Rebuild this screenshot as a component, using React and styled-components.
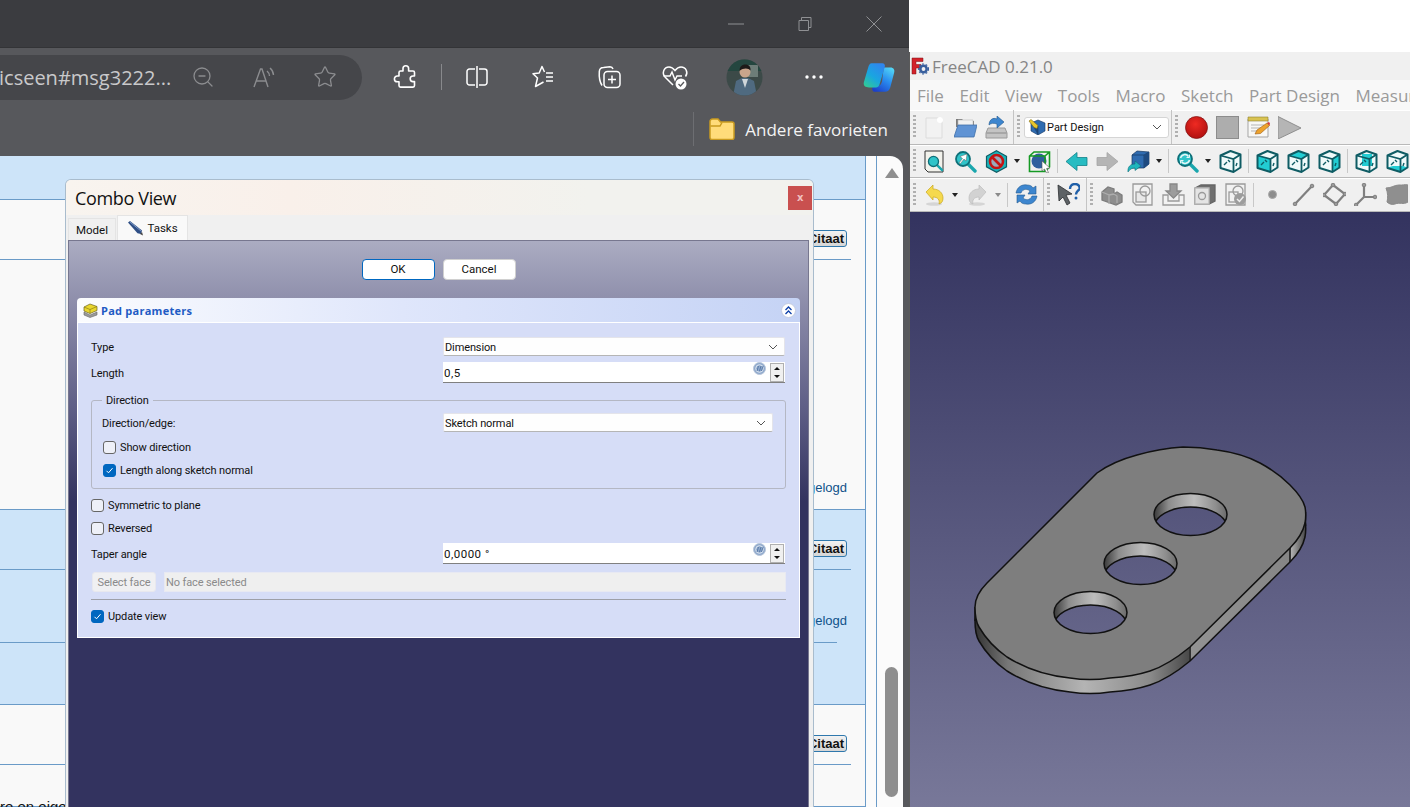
import React from "react";
import styled, { createGlobalStyle } from "styled-components";
import { ZoomOut, Star } from "lucide-react";

const UI = `"Open Sans", "Noto Sans", sans-serif`;
const FORM = `Roboto, "Open Sans", sans-serif`;

const GlobalStyle = createGlobalStyle`
  html, body { margin: 0; padding: 0; height: 100%; }
  body { overflow: hidden; font-family: ${UI}; }
  #root { height: 100%; }
  * { box-sizing: border-box; }
`;

const Shell = styled.div`
  display: flex;
  width: 1410px;
  height: 807px;
  overflow: hidden;
  background: #fff;
`;

/* ---------- browser chrome ---------- */
const Browser = styled.div`
  display: flex;
  flex-direction: column;
  width: 909px;
  flex-shrink: 0;
  background: #57585c;
`;

const TitleBar = styled.div`
  display: flex;
  justify-content: flex-end;
  align-items: center;
  height: 48px;
  padding-right: 27px;
  gap: 53px;
  background: #3b3c40;
  box-shadow: inset 0 -1px 0 #333437;
`;

const WinIcon = styled.svg`
  width: 16px;
  height: 16px;
  fill: none;
  stroke: #8f9093;
  stroke-width: 1;
`;

const NavRow = styled.div`
  display: flex;
  align-items: center;
  height: 64px;
  padding-bottom: 6px;
`;

const AddressBar = styled.div`
  display: flex;
  align-items: center;
  width: 362px;
  height: 45px;
  padding-right: 25px;
  border-radius: 0 23px 23px 0;
  background: #45464a;
  color: #c9c9cb;
  font-size: 20px;
  overflow: hidden;
`;

const AddressText = styled.span`
  flex: 1;
  white-space: nowrap;
  margin-left: -1px;
`;

const AddressIcons = styled.div`
  display: flex;
  align-items: center;
  gap: 36px;
  color: #8b8c8f;
`;

const NavButtons = styled.div`
  display: flex;
  align-items: center;
  gap: 30px;
  margin-left: 25px;
`;

const NavButton = styled.div`
  display: flex;
  justify-content: center;
  align-items: center;
  width: ${(p) => p.$w || 36}px;
  height: 36px;
  color: #fff;
`;

const NavDivider = styled.div`
  width: 1px;
  height: 26px;
  margin: 0 -13px 0 -12px;
  background: #88898c;
`;

const FavRow = styled.div`
  display: flex;
  justify-content: flex-end;
  align-items: center;
  height: 44px;
  padding: 0 21px 10px 0;
  color: #f3f3f3;
  font-size: 17px;
`;

const FavDivider = styled.div`
  width: 1px;
  height: 34px;
  margin-right: 15px;
  background: #6d6e72;
`;

const FavLabel = styled.span`
  margin-left: 10px;
`;

const BrowserPage = styled.div`
  position: relative;
  display: flex;
  flex: 1;
  min-height: 0;
  overflow: hidden;
`;

/* ---------- forum page behind the dialog ---------- */
const Forum = styled.div`
  display: flex;
  flex-direction: column;
  width: 866px;
  border-right: 1px solid #6a9bc8;
  background: #f9f9f9;
`;

const ForumRow = styled.div`
  display: flex;
  flex-direction: column;
  height: ${(p) => p.$h}px;
  flex-shrink: 0;
  border-bottom: 1px solid #6a9bc8;
  background: ${(p) => (p.$alt ? "#cde4f9" : "#f9f9f9")};
`;

const PostHead = styled.div`
  display: flex;
  justify-content: flex-end;
  height: 60px;
  flex-shrink: 0;
  margin-right: 14px;
  padding: 30px 4px 0 0;
  border-bottom: 1px solid #6a9bc8;
`;

const QuoteButton = styled.div`
  height: 17px;
  padding: 0 2px;
  border: 1px solid #2f78ad;
  border-radius: 3px;
  background: linear-gradient(#f2f2f2, #d5d5d5);
  color: #111;
  font: bold 13px/15px "Liberation Sans", sans-serif;
`;

const SignedText = styled.div`
  color: #105289;
  font: 13px/17px "Liberation Sans", sans-serif;
  text-align: right;
`;

const PostBody = styled.div`
  display: flex;
  flex: 1;
  flex-direction: column;
  justify-content: flex-end;
  padding: 0 18px 13px 0;
`;

const SignedBlock = styled.div`
  width: 837px;
  height: 73px;
  padding-top: 42px;
  border-bottom: 1px solid #6a9bc8;

  ${SignedText} {
    margin-right: -10px;
  }
`;

const PostText = styled.div`
  margin-top: 33px;
  color: #111;
  font: 15px/18px "Liberation Sans", sans-serif;
`;

const Gutter = styled.div`
  width: 11px;
  border-right: 1px solid #6a9bc8;
  background: #fbfbfb;
`;

const ScrollTrack = styled.div`
  display: flex;
  flex-direction: column;
  justify-content: space-between;
  align-items: center;
  width: 26px;
  padding: 12px 5px 10px 8px;
  border-top-right-radius: 13px;
  background: #fbfbfb;
`;

const ScrollArrow = styled.div`
  width: 0;
  height: 0;
  border-left: 7px solid transparent;
  border-right: 7px solid transparent;
  border-bottom: 10px solid #8f8f8f;
`;

const ScrollThumb = styled.div`
  width: 13px;
  height: 130px;
  border-radius: 7px;
  background: #8e8e8e;
`;

/* ---------- Combo View dialog ---------- */
const Dialog = styled.div`
  position: absolute;
  top: 24px;
  left: 66px;
  bottom: -4px;
  display: flex;
  flex-direction: column;
  width: 747px;
  padding: 0 4px 0 2px;
  border-radius: 5px 5px 0 0;
  background: #f0f0f0;
  box-shadow: 0 0 0 1px #a9bccd;
  font-family: ${FORM};
`;

const DialogHead = styled.div`
  display: flex;
  justify-content: space-between;
  align-items: center;
  height: 35px;
  margin: 0 -4px 0 -2px;
  padding: 0 1px 0 9px;
  border-radius: 5px 5px 0 0;
  background: linear-gradient(90deg, #f8f4ef, #f9f0ea 30%, #f2f2ee 70%);
  color: #111;
  font-family: ${UI};
  font-size: 18px;
  letter-spacing: -0.35px;
`;

const CloseBox = styled.div`
  display: flex;
  justify-content: center;
  align-items: center;
  width: 24px;
  height: 24px;
  background: #c9504f;
  color: #f0c0c0;
  font: bold 10px "DejaVu Sans", sans-serif;
`;

const TabBar = styled.div`
  display: flex;
  align-items: flex-end;
  height: 25px;
  gap: 1px;
`;

const Tab = styled.div`
  display: flex;
  justify-content: center;
  align-items: center;
  gap: 3px;
  width: ${(p) => p.$w}px;
  height: ${(p) => (p.$active ? 25 : 22)}px;
  border: 1px solid #e4e4e4;
  border-bottom: 0;
  background: ${(p) => (p.$active ? "#f9f9f9" : "#f0f0f0")};
  color: #111;
  font-size: 11.5px;
`;

const TaskPanel = styled.div`
  flex: 1;
  padding: 18px 8px 0;
  border: 1px solid #77778f;
  background: linear-gradient(#abacc2 0, #8e8eab 60px, #5d5d85 170px, #33335f 260px);
`;

const ActionRow = styled.div`
  display: flex;
  justify-content: center;
  gap: 8px;
  margin-bottom: 18px;
`;

const ActionButton = styled.div`
  width: 73px;
  height: 21px;
  border: 1px solid ${(p) => (p.$primary ? "#0067c0" : "#d0d0d0")};
  border-radius: 4px;
  background: #fff;
  color: #111;
  font-size: 11.5px;
  line-height: 19px;
  text-align: center;
`;

const PadPanel = styled.div`
  width: 723px;
`;

const PadHead = styled.div`
  display: flex;
  align-items: center;
  gap: 3px;
  height: 25px;
  padding: 0 4px 0 6px;
  border-radius: 4px 4px 0 0;
  border-bottom: 1px solid #fff;
  background: linear-gradient(90deg, #fbfcfe, #dfe6fb 45%, #c5d3f5);
  color: #1f5bc4;
  font-family: ${UI};
  font-size: 11px;
  font-weight: 700;
  letter-spacing: 0.25px;
`;

const PadTitle = styled.span`
  flex: 1;
`;

const PadBody = styled.div`
  display: flex;
  flex-direction: column;
  padding: 14px 13px 10px;
  border: 1px solid #fff;
  border-top: 0;
  background: #d6ddf7;
  color: #111;
  font-size: 11px;
  letter-spacing: -0.12px;
`;

const FormRow = styled.div`
  display: flex;
  justify-content: space-between;
  align-items: center;
  margin-top: ${(p) => p.$mt || 0}px;
  padding-right: ${(p) => p.$pr || 0}px;
`;

const RowLabel = styled.span`
  padding-top: 2px;
`;

const SelectBox = styled.div`
  display: flex;
  justify-content: space-between;
  align-items: center;
  width: ${(p) => p.$w}px;
  height: 19px;
  padding: 1px 6px 0 1px;
  border: 1px solid #e4e4ea;
  border-bottom-color: #b5b5b5;
  border-radius: 2px;
  background: #fefefe;
`;

const SpinField = styled.div`
  display: flex;
  align-items: center;
  width: 342px;
  height: 21px;
  padding: 1px 1px 0 1px;
  border-bottom: 1px solid #808080;
  background: #fff;
  font-size: 11.5px;
  letter-spacing: 0.5px;
`;

const SpinValue = styled.span`
  flex: 1;
`;

const SpinButtons = styled.div`
  display: flex;
  flex-direction: column;
  margin-left: 4px;
  width: 14px;
  border: 1px solid #b0b0b0;
`;

const SpinPart = styled.div`
  display: flex;
  justify-content: center;
  align-items: center;
  height: 8.5px;
  background: #f0f0f0;

  &:after {
    content: "";
    border-left: 3px solid transparent;
    border-right: 3px solid transparent;
    ${(p) => (p.$down ? "border-top: 3px solid #111;" : "border-bottom: 3px solid #111;")}
  }
`;

const GroupBox = styled.fieldset`
  margin: 9px 0 0;
  padding: 5px 12px 7px 10px;
  min-width: 0;
  border: 1px solid #b4b7c4;
  border-radius: 3px;
`;

const GroupLegend = styled.legend`
  padding: 2px 4px 0;
  font-size: 11px;
  line-height: 14px;
`;

const CheckRow = styled.label`
  display: flex;
  align-items: center;
  gap: 4px;
  height: 23px;
  margin-top: ${(p) => p.$mt || 0}px;
  padding-top: 1px;
`;

const CheckBox = styled.span`
  display: flex;
  justify-content: center;
  align-items: center;
  width: 13px;
  height: 13px;
  margin-left: ${(p) => p.$ml || 0}px;
  border: 1px solid ${(p) => (p.$on ? "#0067c0" : "#666")};
  border-radius: 3px;
  background: ${(p) => (p.$on ? "#0067c0" : "#eef0f8")};
`;

const FaceRow = styled.div`
  display: flex;
  gap: 8px;
  height: 20px;
  margin: 8px 0 0 1px;
  color: #8a8a8a;
`;

const FaceButton = styled.div`
  width: 64px;
  border: 1px solid #e8e8ee;
  border-radius: 3px;
  background: #f0f0f2;
  line-height: 19px;
  text-align: center;
`;

const FaceField = styled.div`
  flex: 1;
  padding-left: 1px;
  border: 1px solid #e8e9f2;
  background: #efefef;
  line-height: 19px;
`;

const Divider = styled.div`
  height: 1px;
  margin-top: 7px;
  background: #9d9fa8;
`;

/* ---------- FreeCAD window ---------- */
const CadColumn = styled.div`
  display: flex;
  flex-direction: column;
  flex: 1;
  min-width: 0;
`;

const WhiteGap = styled.div`
  height: 52px;
  background: #fff;
`;

const CadWindow = styled.div`
  display: flex;
  flex-direction: column;
  flex: 1;
  min-height: 0;
  border-left: 1px solid #5a5a5a;
  background: #f0f0f0;
  overflow: hidden;
`;

const CadTitle = styled.div`
  display: flex;
  align-items: center;
  gap: 3px;
  height: 28px;
  padding-left: 1px;
  color: #858585;
  font-size: 17px;
`;

const MenuBar = styled.div`
  display: flex;
  align-items: center;
  gap: 15.5px;
  height: 30px;
  padding-left: 7px;
  background: #f8f8f8;
  color: #9a9a9a;
  font-size: 17px;
  white-space: nowrap;
`;

const ToolRow = styled.div`
  display: flex;
  height: ${(p) => p.$h}px;
  flex-shrink: 0;
  border-bottom: 1px solid #b9b9b9;
  box-shadow: inset 0 1px 0 #fff;
  background: #f0f0f0;
`;

const Segment = styled.div`
  display: flex;
  align-items: center;
  gap: 8px;
  ${(p) => (p.$w ? `width: ${p.$w}px; border-right: 1px solid #c4c4c4;` : "")}
  flex-shrink: 0;
  padding-left: 3px;
`;

const Grip = styled.div`
  width: 3px;
  height: 24px;
  margin-right: -1px;
  background: repeating-linear-gradient(to bottom, #b0b0b0 0 2px, transparent 2px 4px);
`;

const Sep = styled.div`
  width: 1px;
  height: 24px;
  margin: 0 -1px 0 -2px;
  background: #c8c8c8;
`;

const DropArrow = styled.div`
  width: 0;
  height: 0;
  margin-left: -2px;
  border-left: 3.5px solid transparent;
  border-right: 3.5px solid transparent;
  border-top: 4px solid ${(p) => (p.$dim ? "#8a8a8a" : "#222")};
`;

const WorkbenchBox = styled.div`
  display: flex;
  align-items: center;
  width: 145px;
  height: 21px;
  margin-left: -3px;
  padding: 0 6px 0 3px;
  border: 1px solid #d5d5d5;
  border-radius: 3px;
  background: #fff;
  color: #111;
  font-family: ${FORM};
  font-size: 11px;
`;

const WorkbenchLabel = styled.span`
  flex: 1;
  margin-left: 1px;
`;

const Ico = styled.svg`
  display: block;
  width: 23px;
  height: 23px;
  flex-shrink: 0;
`;

const BadgeSvg = styled.svg`
  flex-shrink: 0;
  width: 13px;
  height: 13px;
  margin-top: -8px;
`;

const Viewport = styled.div`
  flex: 1;
  min-height: 0;
  background: linear-gradient(#33335f, #787899);
`;

const ModelSvg = styled.svg`
  display: block;
  width: 500px;
  height: 595px;
`;

/* ---------- small drawings ---------- */
const Chevron = () => (
  <svg width="10" height="6" viewBox="0 0 10 6" fill="none" stroke="#555" strokeWidth="1">
    <path d="M1 1l4 4 4-4" />
  </svg>
);

const Tick = () => (
  <svg width="9" height="9" viewBox="0 0 9 9" fill="none" stroke="#fff" strokeWidth="1">
    <path d="M1.5 4.8l2 2 4-4.6" />
  </svg>
);

const FxBadge = () => (
  <BadgeSvg viewBox="0 0 13 13">
    <circle cx="6.5" cy="6.5" r="6" fill="#8fa9cc" stroke="#b8c6da" />
    <circle cx="6.5" cy="6.5" r="3.8" fill="none" stroke="#dfe7f2" strokeWidth="1" />
    <path d="M4 9l1.5-5M6.5 9L8 4M8.5 9L10 4" stroke="#4d6f9e" strokeWidth=".8" />
  </BadgeSvg>
);

const PencilIcon = () => (
  <svg width="17" height="15" viewBox="0 0 17 15">
    <path d="M1 1.5L3 0l12 9.5-1 3.5-3.5-.8z" fill="#2f4f86" />
    <path d="M3 1l11 9" stroke="#7d9ac8" strokeWidth="1" />
    <path d="M13 13l3 1.5-1-3.5z" fill="#444" />
  </svg>
);

const PadIcon = () => (
  <svg width="15" height="15" viewBox="0 0 15 15">
    <path d="M1 9l6 3 7-3v3l-7 2.5L1 12z" fill="#9a9a9a" stroke="#666" strokeWidth=".6" />
    <path d="M1 4l6-3 7 2.5v4L7 10.5 1 8z" fill="#e9d62e" stroke="#6b6320" strokeWidth=".7" />
    <path d="M1 4l6 2.5L14 3.5M7 6.5v4" fill="none" stroke="#8c7f14" strokeWidth=".7" />
  </svg>
);

const CollapseIcon = () => (
  <svg width="15" height="15" viewBox="0 0 15 15" fill="none">
    <circle cx="7.5" cy="7.5" r="7" fill="#fff" stroke="#c3cbe0" />
    <path d="M4.5 7l3-3 3 3M4.5 11l3-3 3 3" stroke="#0b3ea8" strokeWidth="1.3" />
  </svg>
);

const ReadAloud = () => (
  <svg width="26" height="26" viewBox="0 0 26 26" fill="none" stroke="currentColor" strokeWidth="1.4">
    <path d="M3 23L9.5 5h1.5L17 23M5.5 17h9" />
    <path d="M16 7a7 7 0 0 1 2.5 5M19 4a10 10 0 0 1 3.5 7" />
  </svg>
);

const PuzzleIcon = () => (
  <svg width="26" height="26" viewBox="0 0 26 26" fill="none" stroke="currentColor" strokeWidth="1.6" strokeLinejoin="round">
    <path d="M11 4.5a2.8 2.8 0 0 1 5.6 0V7h4.4A1.5 1.5 0 0 1 22.5 8.5V12h-1.5a2.8 2.8 0 0 0 0 5.6h1.5v4A1.5 1.5 0 0 1 21 23.1H8.5A1.5 1.5 0 0 1 7 21.6v-3.8H5.3a2.9 2.9 0 0 1 0-5.8H7V8.5A1.5 1.5 0 0 1 8.5 7H11z" />
  </svg>
);

const SplitIcon = () => (
  <svg width="26" height="26" viewBox="0 0 26 26" fill="none" stroke="currentColor" strokeWidth="1.5">
    <path d="M11 5H5.5A2.5 2.5 0 0 0 3 7.5v11A2.5 2.5 0 0 0 5.5 21H11M15 5h5.5A2.5 2.5 0 0 1 23 7.5v11a2.5 2.5 0 0 1-2.5 2.5H15" />
    <path d="M13 2v22" />
  </svg>
);

const FavListIcon = () => (
  <svg width="26" height="26" viewBox="0 0 26 26" fill="none" stroke="currentColor" strokeWidth="1.5" strokeLinejoin="round">
    <path d="M14.5 8L12 2.5 9.2 9 3 9.8 7.5 14 5.5 22.5l8-4.5" />
    <path d="M16 9h7M16 13h7M16 17h7" />
  </svg>
);

const CollectionsIcon = () => (
  <svg width="26" height="26" viewBox="0 0 26 26" fill="none" stroke="currentColor" strokeWidth="1.5">
    <path d="M6 21.5C3.8 18 3 12 3.3 7.5 3.5 5 5 3.5 7.5 3.5L14 2.8c1.5 0 2.5.7 3 2.2" />
    <rect x="8" y="7.5" width="16" height="16" rx="3.5" />
    <path d="M16 11.5v8M12 15.5h8" />
  </svg>
);

const HealthIcon = () => (
  <svg width="28" height="28" viewBox="0 0 28 28" fill="none" stroke="currentColor" strokeWidth="1.5">
    <path d="M12 22l-8-8C.5 10 3 4 8 4c2.5 0 4.3 1.3 6 3.5C15.7 5.3 17.5 4 20 4c5 0 7.5 5.5 4.5 9.5" />
    <path d="M2.5 13H9l2-4 3 8 2-4h5" />
    <circle cx="20" cy="21" r="5.5" fill="#fff" stroke="none" />
    <path d="M17.5 21l2 2 3.5-4" stroke="#57585c" strokeWidth="1.3" />
  </svg>
);

const Avatar = () => (
  <svg width="37" height="37" viewBox="0 0 37 37">
    <defs>
      <clipPath id="avatar-clip">
        <circle cx="18.5" cy="18.5" r="18" />
      </clipPath>
    </defs>
    <g clipPath="url(#avatar-clip)">
      <rect width="37" height="37" fill="#3c4a48" />
      <rect x="0" y="0" width="37" height="12" fill="#24463f" />
      <rect x="22" y="6" width="10" height="12" fill="#6d7d78" />
      <path d="M7 37l3-15 6-3h6l6 3 3 15z" fill="#4f6a80" />
      <path d="M16 20l3 9 3-9z" fill="#cfd6da" />
      <circle cx="19" cy="13" r="5.5" fill="#c9a58c" />
      <path d="M13.5 12c0-5 3-6.5 6-6.5s5.5 2 5 6c-2-2.5-7-3-11 .5z" fill="#1d1a18" />
    </g>
  </svg>
);

const DotsIcon = () => (
  <svg width="20" height="6" viewBox="0 0 20 6" fill="#fff">
    <circle cx="3" cy="3" r="1.7" />
    <circle cx="10" cy="3" r="1.7" />
    <circle cx="17" cy="3" r="1.7" />
  </svg>
);

const CopilotLogo = () => (
  <svg width="37" height="35" viewBox="0 0 37 35">
    <defs>
      <linearGradient id="cop-a" x1="0" y1="1" x2=".7" y2="0">
        <stop offset="0" stopColor="#35d08a" />
        <stop offset=".5" stopColor="#19a6e0" />
        <stop offset="1" stopColor="#2f86ee" />
      </linearGradient>
      <linearGradient id="cop-b" x1=".2" y1="1" x2=".8" y2="0">
        <stop offset="0" stopColor="#1b3fc9" />
        <stop offset=".55" stopColor="#2a8ff0" />
        <stop offset="1" stopColor="#52d4f5" />
      </linearGradient>
    </defs>
    <path d="M24 6h8c3 0 5 2.5 4 6l-4.5 17c-1 3-3 5-6 5H14c-3 0-4-3-3-5l2-2h4c3 0 4-2 5-5z" fill="url(#cop-b)" />
    <path d="M10 1h12c3 0 4 2 3 5l-6 20c-1 2-2 3-4 3H7c-4 0-7-2-6-6L6 6c.7-3 2-5 4-5z" fill="url(#cop-a)" />
  </svg>
);

const FolderIcon = () => (
  <svg width="26" height="22" viewBox="0 0 26 22">
    <path d="M1 3.5A2.5 2.5 0 0 1 3.5 1H9l2.5 3H23a2 2 0 0 1 2 2v13.5a2 2 0 0 1-2 2H3a2 2 0 0 1-2-2z" fill="#ffdc7a" stroke="#c99a1f" strokeWidth="1.5" />
    <path d="M1.5 8H11l2-3.5" fill="none" stroke="#c99a1f" strokeWidth="1.5" />
  </svg>
);

const FreeCadLogo = () => (
  <svg width="18" height="18" viewBox="0 0 18 18">
    <path d="M1 1h11v3.5H5v3h5V11H5v6H1z" fill="#d3222a" stroke="#7a1115" strokeWidth=".5" />
    <circle cx="12.5" cy="12" r="3.2" fill="none" stroke="#39609e" strokeWidth="2.6" />
    <circle cx="12.5" cy="12" r="5" fill="none" stroke="#39609e" strokeWidth="1.2" strokeDasharray="1.8 1.8" />
  </svg>
);

const NewDoc = () => (
  <Ico viewBox="0 0 23 23">
    <path d="M3 2h16v20H3z" fill="#f2f2f2" stroke="#dcdcdc" />
    <circle cx="17" cy="4" r="3" fill="#fff" />
  </Ico>
);

const OpenDoc = () => (
  <Ico viewBox="0 0 23 23">
    <path d="M2 3h6l2 2h10v6H2z" fill="#7c7c7c" />
    <path d="M4 4h15v8H4z" fill="#f2f2f2" stroke="#bbb" strokeWidth=".6" />
    <path d="M4 9h19l-3 12H0z" fill="#5f93d4" stroke="#3f6ea8" strokeWidth=".8" />
  </Ico>
);

const SaveDoc = () => (
  <Ico viewBox="0 0 23 23">
    <path d="M3 12h17l2 5v5H1v-5z" fill="#c4c4c4" stroke="#9a9a9a" />
    <path d="M1.5 17h20" stroke="#8a8a8a" />
    <path d="M4 9C4 4 8 1 12 3V0l7 6-7 6V8C9 7 6 7 4 9z" fill="#3d86cf" stroke="#22598f" strokeWidth=".6" />
  </Ico>
);

const RecordIcon = () => (
  <Ico viewBox="0 0 23 23">
    <defs>
      <radialGradient id="rec" cx=".45" cy=".35" r=".75">
        <stop offset="0" stopColor="#ef2a22" />
        <stop offset="1" stopColor="#a80d0d" />
      </radialGradient>
    </defs>
    <circle cx="11.5" cy="11.5" r="11" fill="url(#rec)" stroke="#7d1010" strokeWidth=".7" />
  </Ico>
);

const StopIcon = () => (
  <Ico viewBox="0 0 23 23">
    <rect x=".5" y=".5" width="22" height="22" fill="#adadad" stroke="#8c8c8c" />
  </Ico>
);

const MacroIcon = () => (
  <Ico viewBox="0 0 23 23">
    <path d="M1 3h20v18H1z" fill="#f8f8f6" stroke="#a5a5a5" />
    <path d="M1 1h20v4H1z" fill="#d9c352" stroke="#8e8230" strokeWidth=".6" />
    <path d="M4 9h13M4 12h10M4 15h6" stroke="#b5b5b5" />
    <path d="M8 18l2-4 10-7 2.5 2.5-9 8z" fill="#eda22c" stroke="#9c5a12" strokeWidth=".6" />
    <path d="M20 7l2.5 2.5 .5-2-1-1.5z" fill="#d93b3b" />
  </Ico>
);

const PlayIcon = () => (
  <Ico viewBox="0 0 23 23">
    <path d="M0 .5L23 12 0 23z" fill="#b5b5b5" stroke="#8f8f8f" />
  </Ico>
);

const Lens = ({ children }) => (
  <g>
    <path d="M13 13l8 8" stroke="#1aa6ad" strokeWidth="3.4" strokeLinecap="round" />
    <circle cx="9" cy="9" r="7" fill="#2fc4c9" stroke="#0f6f78" strokeWidth="1.8" />
    {children}
  </g>
);

const FitAll = () => (
  <Ico viewBox="0 0 23 23">
    <path d="M2 1h18v21H5l-3-3z" fill="#f2f2ec" stroke="#333" />
    <g transform="translate(4 5) scale(.72)">
      <Lens />
    </g>
  </Ico>
);

const FitSelection = () => (
  <Ico viewBox="0 0 23 23">
    <Lens>
      <path d="M5 13l3.5-4.5L6 6.5l7-2.5-1 7-2-2-3.5 4.5z" fill="#fff" stroke="#666" strokeWidth=".5" />
    </Lens>
  </Ico>
);

const DrawStyle = () => (
  <Ico viewBox="0 0 23 23">
    <path d="M11.5 .8l10 5.5v10.5l-10 5.5-10-5.5V6.3z" fill="#1ab4ba" stroke="#0f5c64" strokeWidth="1.2" />
    <circle cx="11.5" cy="11.5" r="6.5" fill="#9ab" stroke="#c41414" strokeWidth="2.6" />
    <path d="M7 7l9 9" stroke="#c41414" strokeWidth="2.6" />
  </Ico>
);

const BoundBox = () => (
  <Ico viewBox="0 0 23 23">
    <circle cx="11" cy="11" r="7.5" fill="#2e5f9e" />
    <path d="M1.5 6L6 2h15.5v15L17 21.5H1.5zM1.5 6H17v15.5M17 6l4.5-4" fill="none" stroke="#159a24" strokeWidth="1.6" />
    <path d="M14 11l8 7-3.5.5 2 4-2 .5-2-4-2.5 2z" fill="#fff" stroke="#555" strokeWidth=".6" />
  </Ico>
);

const ArrowBack = ({ dim }) => (
  <Ico viewBox="0 0 23 23">
    <path
      d={dim ? "M22 11.5L11 2.5v5H1v8h10v5z" : "M1 11.5l11-9v5h10v8H12v5z"}
      fill={dim ? "#b5b5b5" : "#27bcc2"}
      stroke={dim ? "#a5a5a5" : "#128189"}
      strokeWidth=".8"
    />
  </Ico>
);

const ViewsCube = () => (
  <Ico viewBox="0 0 23 23">
    <path d="M5 5l5-4 12 1v12l-5 4H5z" fill="#2f6bb0" stroke="#16365f" strokeWidth=".7" />
    <path d="M5 5h12v13M17 5l5-3" fill="none" stroke="#16365f" strokeWidth=".7" />
    <path d="M17 5l5-3v12l-5 4z" fill="#1e4a80" />
    <path d="M1 22c-.5-5 2-8 7-8v-3l6 5-6 4.5V18c-3 0-5 1-7 4z" fill="#1fb6bd" stroke="#0f6f78" strokeWidth=".6" />
  </Ico>
);

const SyncLens = () => (
  <Ico viewBox="0 0 23 23">
    <Lens>
      <path d="M4.5 8a4.5 4.5 0 0 1 8-1.5M13.5 10a4.5 4.5 0 0 1-8 1.5" fill="none" stroke="#e6f6f7" strokeWidth="1.5" />
      <path d="M13.5 4.5v3h-3M4.5 13.5v-3h3" fill="none" stroke="#e6f6f7" strokeWidth="1" />
    </Lens>
  </Ico>
);

/* teal wire cube, the views only differ in which face is filled */
const FACES = {
  front: "M1.5 5.5l13 3.5v13l-13-4z",
  top: "M1.5 5.5l10-4.5 10 3.5-7 4.5z",
  right: "M14.5 9l7-4.5v13l-7 4.5z",
  rear: "M7 4h10v12H7z",
  bottom: "M1.5 17.5L7 16h10l4.5 1.5-7 4.5z",
};

const ViewCube = ({ face }) => (
  <Ico viewBox="0 0 23 23">
    <path d="M1.5 5.5l10-4.5 10 3.5v13l-7 4.5-13-4z" fill="#f0fafa" />
    {FACES[face] && <path d={FACES[face]} fill="#22cdd3" />}
    <path d="M1.5 5.5l10-4.5 10 3.5v13l-7 4.5-13-4z" fill="none" stroke="#0f5c64" strokeWidth="2" strokeLinejoin="round" />
    <path d="M1.5 5.5l13 3.5 7-4.5M14.5 9v13" fill="none" stroke="#0f5c64" strokeWidth="1.8" />
    <path d="M5 15l3-3M9 10l2 2M18 13l-1 3" stroke="#0f5c64" strokeWidth="1.4" />
  </Ico>
);

const UndoIcon = ({ dim }) => (
  <Ico viewBox="0 0 23 23">
    <ellipse cx="11" cy="21" rx="8" ry="1.8" fill="#d5d5d5" />
    <g transform={dim ? "translate(23 0) scale(-1 1)" : undefined}>
      <path
        d="M3 9l7-7v4c6 0 10 4 10 9 0 3-1 5-4 6 1-4-1-7-6-7v3z"
        fill={dim ? "#d2d2d2" : "#f5d94e"}
        stroke={dim ? "#bdbdbd" : "#c9a81e"}
        strokeWidth=".7"
      />
    </g>
  </Ico>
);

const RefreshIcon = () => (
  <Ico viewBox="0 0 23 23">
    <path d="M1 10C2 4 7 1 12 2c3 0 5 1 6 3l3-2v8h-8l2-3c-2-2-7-3-9 2z" fill="#3d86cf" stroke="#22598f" strokeWidth=".6" />
    <path d="M22 13c-1 6-6 9-11 8-3 0-5-1-6-3l-3 2v-8h8l-2 3c2 2 7 3 9-2z" fill="#3d86cf" stroke="#22598f" strokeWidth=".6" />
  </Ico>
);

const WhatsThis = () => (
  <Ico viewBox="0 0 23 23">
    <path d="M1 2l14 9-6 1 4 8-3 2-4-8-4 4z" fill="#5d6265" stroke="#2c2f31" strokeWidth=".8" />
    <path d="M13 6c0-3 2-5 5-5s5 2 4.5 4.5c-.5 2-3.5 3-3.5 6" fill="none" stroke="#1f5fa8" strokeWidth="2.4" />
    <circle cx="19" cy="15" r="1.5" fill="#1f5fa8" />
  </Ico>
);

const GreyIcon = ({ children }) => (
  <Ico viewBox="0 0 23 23" fill="none" stroke="#9a9a9a" strokeWidth="1.3">
    {children}
  </Ico>
);

const ModelIcons = [
  <GreyIcon key="solid">
    <path d="M2 9l6-5 6 2v5l3-2 5 3v7l-6 3-14-5z" fill="#8d8d8d" stroke="#7c7c7c" />
    <path d="M2 9l7 3v9M9 12l5-1M14 11l3 2v7" stroke="#adadad" />
  </GreyIcon>,
  <GreyIcon key="sketch">
    <path d="M2 1h19v21H5l-3-3z" fill="#f2f2f2" />
    <rect x="5" y="9" width="10" height="10" fill="#e8e8e8" />
    <circle cx="14" cy="8" r="5" fill="none" />
  </GreyIcon>,
  <GreyIcon key="import">
    <path d="M1 12h5v6h11v-6h5v10H1z" fill="#f2f2f2" />
    <path d="M8 1h7v7h4l-7.5 7L4 8h4z" fill="#9c9c9c" stroke="#888" />
  </GreyIcon>,
  <GreyIcon key="part">
    <path d="M2 5l6-3h14v16l-6 3H2z" fill="#6f6f6f" stroke="#666" />
    <path d="M2 5h14v16H2z" fill="#e4e4e4" stroke="#bbb" />
    <circle cx="9" cy="13" r="3.5" />
  </GreyIcon>,
  <GreyIcon key="attach">
    <path d="M2 1h19v21H2z" fill="#f2f2f2" />
    <rect x="5" y="9" width="9" height="10" />
    <circle cx="14" cy="8" r="5" />
    <circle cx="16" cy="16" r="6" fill="#9d9d9d" stroke="none" />
    <path d="M13 16l2.5 2.5 4-5" stroke="#eee" strokeWidth="1.5" />
  </GreyIcon>,
];

const Sketchy = ({ children }) => (
  <Ico viewBox="0 0 23 23" fill="none" stroke="#7f7f7f" strokeWidth="2.2">
    {children}
  </Ico>
);

const Node = ({ x, y }) => <circle cx={x} cy={y} r="1.8" fill="#9a9a9a" stroke="#7f7f7f" strokeWidth="1" />;

const PrimitiveIcons = [
  <Sketchy key="point">
    <circle cx="11.5" cy="11.5" r="4" fill="#8d8d8d" stroke="#a8a8a8" strokeWidth="1" />
  </Sketchy>,
  <Sketchy key="line">
    <path d="M3 21L20 3" />
    <Node x={3} y={21} />
    <Node x={20} y={3} />
  </Sketchy>,
  <Sketchy key="rect">
    <path d="M10 2L22 11 13 21 1 12z" />
    <Node x={10} y={2} />
    <Node x={22} y={11} />
    <Node x={13} y={21} />
    <Node x={1} y={12} />
  </Sketchy>,
  <Sketchy key="axes">
    <path d="M10 2v12M10 14l12 0M10 14L2 22" />
    <Node x={10} y={2} />
    <Node x={21} y={14} />
    <Node x={2} y={22} />
  </Sketchy>,
  <Sketchy key="face">
    <path d="M1 5c6 0 8-3 13-3 3 .5 6-1 9 0v17c-5 3-8 0-13 2-3 1-6 0-8-2 1-4 1-9-1-14z" fill="#8f8f8f" stroke="#8a8a8a" strokeWidth="1" />
  </Sketchy>,
];

const WorkbenchIcon = () => (
  <svg width="18" height="16" viewBox="0 0 18 16">
    <path d="M3 4l7-3 7 3v8l-7 4-7-4z" fill="#2f6bb0" stroke="#16365f" strokeWidth=".6" />
    <path d="M3 4l7 3v9" fill="#1e4a80" stroke="#16365f" strokeWidth=".6" />
    <path d="M1 2l2-1.5 7 6-1 3-3-1z" fill="#e8c62e" stroke="#7f6a12" strokeWidth=".6" />
  </svg>
);

/* ---------- the part in the 3D view ---------- */
const TOP_FACE =
  "M1097 473L987 583C979 591 975 599 975 607C975 615 976 622 979 627C986 639 997 650 1007 657C1026 669 1048 676 1070 678C1083 680 1097 680 1110 678C1125 677 1138 675 1150 671C1165 666 1178 657 1190 647L1290 548C1298 540 1303 532 1305 523C1306 517 1306 512 1305 507C1303 499 1297 492 1290 485C1281 476 1271 469 1260 463C1247 456 1232 452 1217 450C1206 448 1195 447 1183 447C1167 448 1151 451 1137 455C1122 459 1108 465 1097 473Z";

const HOLES = [
  { id: "hole-a", cx: 1190.5, cy: 514.5 },
  { id: "hole-b", cx: 1140.5, cy: 563.5 },
  { id: "hole-c", cx: 1090.5, cy: 612.5 },
];

const Hole = ({ id, cx, cy }) => (
  <g>
    <clipPath id={id}>
      <ellipse cx={cx} cy={cy} rx="36.5" ry="21" />
    </clipPath>
    <ellipse cx={cx} cy={cy} rx="36.5" ry="21" fill="url(#hole-wall)" />
    <ellipse
      cx={cx}
      cy={cy + 13.5}
      rx="36.5"
      ry="21"
      fill="url(#scene-bg)"
      stroke="#111"
      strokeWidth="1.5"
      clipPath={`url(#${id})`}
    />
    <ellipse cx={cx} cy={cy} rx="36.5" ry="21" fill="none" stroke="#111" strokeWidth="1.5" />
  </g>
);

const PartModel = () => (
  <ModelSvg viewBox="910 212 500 595">
    <defs>
      <linearGradient id="scene-bg" gradientUnits="userSpaceOnUse" x1="0" y1="212" x2="0" y2="807">
        <stop offset="0" stopColor="#33335f" />
        <stop offset="1" stopColor="#787899" />
      </linearGradient>
      <linearGradient id="hole-wall" x1="0" y1="0" x2="1" y2="0">
        <stop offset="0" stopColor="#3a3a3a" />
        <stop offset=".2" stopColor="#8c8c8c" />
        <stop offset=".55" stopColor="#bdbdbd" />
        <stop offset=".85" stopColor="#8d8d8d" />
        <stop offset="1" stopColor="#6a6a6a" />
      </linearGradient>
      <linearGradient id="side-wall" gradientUnits="userSpaceOnUse" x1="975" y1="0" x2="1306" y2="0">
        <stop offset="0" stopColor="#333" />
        <stop offset=".1" stopColor="#777" />
        <stop offset=".33" stopColor="#b4b4b4" />
        <stop offset=".53" stopColor="#8a8a8a" />
        <stop offset=".645" stopColor="#4a4a4a" />
        <stop offset=".648" stopColor="#939393" />
        <stop offset=".95" stopColor="#858585" />
        <stop offset=".955" stopColor="#b0b0b0" />
        <stop offset="1" stopColor="#444" />
      </linearGradient>
    </defs>
    <path d={TOP_FACE} transform="translate(0 14)" fill="url(#side-wall)" stroke="#111" strokeWidth="1.5" />
    <path d="M975 607v14M1305.5 512v14" stroke="#111" strokeWidth="1.5" />
    <path d={TOP_FACE} fill="#7e7e7e" stroke="#111" strokeWidth="1.5" />
    <path d="M1190 647v14M1290 548v14" stroke="#111" strokeWidth="1.5" />
    {HOLES.map((h) => (
      <Hole key={h.id} {...h} />
    ))}
  </ModelSvg>
);

export default function App() {
  return (
    <Shell>
      <GlobalStyle />
      <Browser>
        <TitleBar>
          <WinIcon viewBox="0 0 16 16">
            <path d="M0 8h16" />
          </WinIcon>
          <WinIcon viewBox="0 0 16 16">
            <path d="M2 4.5h9.5v10H2zM4.5 4V1.5H14v10h-2" />
          </WinIcon>
          <WinIcon viewBox="0 0 16 16">
            <path d="M.5.5l15 15M15.5.5l-15 15" />
          </WinIcon>
        </TitleBar>
        <NavRow>
          <AddressBar>
            <AddressText>icseen#msg3222...</AddressText>
            <AddressIcons>
              <ZoomOut size={24} strokeWidth={1.3} />
              <ReadAloud />
              <Star size={24} strokeWidth={1.3} />
            </AddressIcons>
          </AddressBar>
          <NavButtons>
            <NavButton>
              <PuzzleIcon />
            </NavButton>
            <NavDivider />
            <NavButton>
              <SplitIcon />
            </NavButton>
            <NavButton>
              <FavListIcon />
            </NavButton>
            <NavButton>
              <CollectionsIcon />
            </NavButton>
            <NavButton>
              <HealthIcon />
            </NavButton>
            <NavButton $w={42}>
              <Avatar />
            </NavButton>
            <NavButton $w={38}>
              <DotsIcon />
            </NavButton>
            <NavButton $w={32}>
              <CopilotLogo />
            </NavButton>
          </NavButtons>
        </NavRow>
        <FavRow>
          <FavDivider />
          <FolderIcon />
          <FavLabel>Andere favorieten</FavLabel>
        </FavRow>
        <BrowserPage>
          <Forum>
            <ForumRow $alt $h={44} />
            <ForumRow $h={310}>
              <PostHead>
                <QuoteButton>Citaat</QuoteButton>
              </PostHead>
              <PostBody>
                <SignedText>Ingelogd</SignedText>
              </PostBody>
            </ForumRow>
            <ForumRow $alt $h={195}>
              <PostHead>
                <QuoteButton>Citaat</QuoteButton>
              </PostHead>
              <SignedBlock>
                <SignedText>Ingelogd</SignedText>
              </SignedBlock>
            </ForumRow>
            <ForumRow $h={102}>
              <PostHead>
                <QuoteButton>Citaat</QuoteButton>
              </PostHead>
              <PostText>re en eigen</PostText>
            </ForumRow>
          </Forum>
          <Gutter />
          <ScrollTrack>
            <ScrollArrow />
            <ScrollThumb />
          </ScrollTrack>

          <Dialog>
            <DialogHead>
              <span>Combo View</span>
              <CloseBox>x</CloseBox>
            </DialogHead>
            <TabBar>
              <Tab $w={48}>Model</Tab>
              <Tab $w={71} $active>
                <PencilIcon />
                Tasks
              </Tab>
            </TabBar>
            <TaskPanel>
              <ActionRow>
                <ActionButton $primary>OK</ActionButton>
                <ActionButton>Cancel</ActionButton>
              </ActionRow>
              <PadPanel>
                <PadHead>
                  <PadIcon />
                  <PadTitle>Pad parameters</PadTitle>
                  <CollapseIcon />
                </PadHead>
                <PadBody>
                  <FormRow $pr={1}>
                    <RowLabel>Type</RowLabel>
                    <SelectBox $w={342}>
                      Dimension
                      <Chevron />
                    </SelectBox>
                  </FormRow>
                  <FormRow $mt={6} $pr={1}>
                    <RowLabel>Length</RowLabel>
                    <SpinField>
                      <SpinValue>0,5</SpinValue>
                      <FxBadge />
                      <SpinButtons>
                        <SpinPart />
                        <SpinPart $down />
                      </SpinButtons>
                    </SpinField>
                  </FormRow>
                  <GroupBox>
                    <GroupLegend>Direction</GroupLegend>
                    <FormRow>
                      <RowLabel>Direction/edge:</RowLabel>
                      <SelectBox $w={330}>
                        Sketch normal
                        <Chevron />
                      </SelectBox>
                    </FormRow>
                    <CheckRow $mt={3}>
                      <CheckBox $ml={1} />
                      Show direction
                    </CheckRow>
                    <CheckRow>
                      <CheckBox $ml={1} $on>
                        <Tick />
                      </CheckBox>
                      Length along sketch normal
                    </CheckRow>
                  </GroupBox>
                  <CheckRow $mt={4}>
                    <CheckBox />
                    Symmetric to plane
                  </CheckRow>
                  <CheckRow>
                    <CheckBox />
                    Reversed
                  </CheckRow>
                  <FormRow $mt={4} $pr={1}>
                    <RowLabel>Taper angle</RowLabel>
                    <SpinField>
                      <SpinValue>0,0000 °</SpinValue>
                      <FxBadge />
                      <SpinButtons>
                        <SpinPart />
                        <SpinPart $down />
                      </SpinButtons>
                    </SpinField>
                  </FormRow>
                  <FaceRow>
                    <FaceButton>Select face</FaceButton>
                    <FaceField>No face selected</FaceField>
                  </FaceRow>
                  <Divider />
                  <CheckRow $mt={4}>
                    <CheckBox $on>
                      <Tick />
                    </CheckBox>
                    Update view
                  </CheckRow>
                </PadBody>
              </PadPanel>
            </TaskPanel>
          </Dialog>
        </BrowserPage>
      </Browser>

      <CadColumn>
        <WhiteGap />
        <CadWindow>
          <CadTitle>
            <FreeCadLogo />
            FreeCAD 0.21.0
          </CadTitle>
          <MenuBar>
            <span>File</span>
            <span>Edit</span>
            <span>View</span>
            <span>Tools</span>
            <span>Macro</span>
            <span>Sketch</span>
            <span>Part Design</span>
            <span>Measure</span>
          </MenuBar>
          <ToolRow $h={35}>
            <Segment $w={104}>
              <Grip />
              <NewDoc />
              <OpenDoc />
              <SaveDoc />
            </Segment>
            <Segment $w={158}>
              <Grip />
              <WorkbenchBox>
                <WorkbenchIcon />
                <WorkbenchLabel>Part Design</WorkbenchLabel>
                <Chevron />
              </WorkbenchBox>
            </Segment>
            <Segment>
              <Grip />
              <RecordIcon />
              <StopIcon />
              <MacroIcon />
              <PlayIcon />
            </Segment>
          </ToolRow>
          <ToolRow $h={33}>
            <Segment>
              <Grip />
              <FitAll />
              <FitSelection />
              <DrawStyle />
              <DropArrow />
              <BoundBox />
              <Sep />
              <ArrowBack />
              <ArrowBack dim />
              <ViewsCube />
              <DropArrow />
              <Sep />
              <SyncLens />
              <DropArrow />
              <ViewCube face="iso" />
              <Sep />
              <ViewCube face="front" />
              <ViewCube face="top" />
              <ViewCube face="right" />
              <Sep />
              <ViewCube face="rear" />
              <ViewCube face="bottom" />
            </Segment>
          </ToolRow>
          <ToolRow $h={34}>
            <Segment $w={134}>
              <Grip />
              <UndoIcon />
              <DropArrow />
              <UndoIcon dim />
              <DropArrow $dim />
              <Sep />
              <RefreshIcon />
            </Segment>
            <Segment $w={43}>
              <Grip />
              <WhatsThis />
            </Segment>
            <Segment>
              <Grip />
              {ModelIcons}
              <Sep />
              {PrimitiveIcons}
            </Segment>
          </ToolRow>
          <Viewport>
            <PartModel />
          </Viewport>
        </CadWindow>
      </CadColumn>
    </Shell>
  );
}
